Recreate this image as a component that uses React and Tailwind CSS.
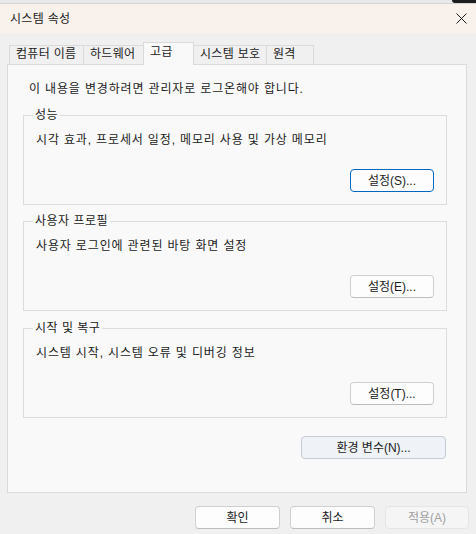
import React from 'react';

const FONT = { fontFamily: '"Liberation Sans", "Noto Sans CJK KR", sans-serif' };

const tabs = [
  { label: '컴퓨터 이름', w: 'w-[75px]' },
  { label: '하드웨어', w: 'w-[60px]' },
  { label: '고급', w: 'w-[51px]', active: true },
  { label: '시스템 보호', w: 'w-[73px]' },
  { label: '원격', w: 'w-[47px]' },
];

const groups = [
  { title: '성능', text: '시각 효과, 프로세서 일정, 메모리 사용 및 가상 메모리', btn: '설정(S)...', focus: true, mt: 'mt-[18px]' },
  { title: '사용자 프로필', text: '사용자 로그인에 관련된 바탕 화면 설정', btn: '설정(E)...', mt: 'mt-[16px]' },
  { title: '시작 및 복구', text: '시스템 시작, 시스템 오류 및 디버깅 정보', btn: '설정(T)...', mt: 'mt-[17px]' },
];

const Button = ({ children, focus, disabled, className = '' }) => {
  let tone = 'bg-[#fdfdfd] border-[#d0d0d0] border-b-[#bcbcbc] text-[#1b1b1b]';
  if (focus) tone = 'bg-[#fdfdfd] border-[#0067c0] text-[#1b1b1b]';
  if (disabled) tone = 'bg-[#f5f5f5] border-[#e5e5e5] text-[#a0a0a0]';
  return (
    <button className={`h-[23px] rounded-[4px] border text-[12px] leading-none flex items-center justify-center ${tone} ${className}`}>
      {children}
    </button>
  );
};

export default function App() {
  return (
    <div className="w-[476px] h-[534px] bg-[#f0f0f0] flex flex-col overflow-hidden text-[#1b1b1b]" style={FONT}>
      {/* desktop strip behind the window */}
      <div className="h-[4px] flex bg-[#e9e9e9] border-b border-[#d4d4d4]">
        <div className="flex-1" />
        <div className="w-[24px] bg-[#1c1c1c] rounded-bl-[3px]" />
      </div>

      {/* title bar */}
      <div className="h-[29px] bg-[#f9f1ec] flex items-center justify-between pl-[10px] pr-[9px]">
        <span className="text-[12px] leading-none tracking-[0.3px]">시스템 속성</span>
        <svg width="11" height="11" viewBox="0 0 11 11">
          <path d="M0.5 0.5 L10.5 10.5 M10.5 0.5 L0.5 10.5" stroke="#1a1a1a" strokeWidth="1" />
        </svg>
      </div>

      <div className="flex-1 flex flex-col px-[7px] pt-[9px]">
        {/* tabs */}
        <div className="flex items-end pl-[2px] relative z-10 -mb-px">
          {tabs.map((t) =>
            t.active ? (
              <div
                key={t.label}
                className={`${t.w} -ml-px h-[23px] bg-[#f9f9f9] border border-b-0 border-[#dadada] pl-[6px] pt-[2px] text-[12px] leading-[14px] tracking-[0.3px]`}
              >
                {t.label}
              </div>
            ) : (
              <div
                key={t.label}
                className={`${t.w} h-[20px] bg-[#f0f0f0] border border-[#dadada] border-l-0 first:border-l pl-[6px] pt-[1px] text-[12px] leading-[14px] tracking-[0.3px]`}
              >
                {t.label}
              </div>
            )
          )}
        </div>

        {/* tab panel */}
        <div className="h-[429px] mr-[2px] bg-[#f9f9f9] border border-[#dadada] flex flex-col pl-[15px] pr-[19px]">
          <p className="mt-[16px] pl-[6px] text-[12px] leading-[16px] tracking-[0.85px]">이 내용을 변경하려면 관리자로 로그온해야 합니다.</p>

          {groups.map((g) => (
            <div key={g.title} className={`${g.mt} border border-[#dcdcdc] pl-[12px] pr-[12px] pb-[12px]`}>
              <div className="-mt-[8px] -ml-[3px] px-[2px] w-fit bg-[#f9f9f9] text-[12px] leading-[14px] tracking-[0.5px]">{g.title}</div>
              <p className="mt-[10px] text-[12px] leading-[16px] tracking-[0.85px]">{g.text}</p>
              <div className="flex justify-end mt-[21px]">
                <Button focus={g.focus} className="w-[84px]">{g.btn}</Button>
              </div>
            </div>
          ))}

          <div className="flex justify-end mt-[18px] pr-[1px]">
            <Button className="w-[145px] !bg-[#eff3f8] !border-[#c4cbd4]">환경 변수(N)...</Button>
          </div>
        </div>

        {/* dialog buttons */}
        <div className="flex justify-end gap-[10px] mt-[13px]">
          <Button className="w-[85px]">확인</Button>
          <Button className="w-[85px]">취소</Button>
          <Button disabled className="w-[84px]">적용(A)</Button>
        </div>
      </div>
    </div>
  );
}
